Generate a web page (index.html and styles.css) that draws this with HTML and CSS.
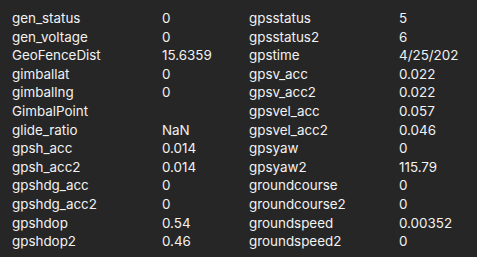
FILE: index.html
```html
<!DOCTYPE html>
<html>
<head>
<meta charset="utf-8">
<link rel="stylesheet" href="styles.css">
</head>
<body>
<div class="grid">
  <div class="row"><span class="n">gen_status</span><span class="v">0</span><span class="n">gpsstatus</span><span class="v">5</span></div>
  <div class="row"><span class="n">gen_voltage</span><span class="v">0</span><span class="n">gpsstatus2</span><span class="v">6</span></div>
  <div class="row"><span class="n">GeoFenceDist</span><span class="v">15.6359</span><span class="n">gpstime</span><span class="v">4/25/202</span></div>
  <div class="row"><span class="n">gimballat</span><span class="v">0</span><span class="n">gpsv_acc</span><span class="v">0.022</span></div>
  <div class="row"><span class="n">gimballng</span><span class="v">0</span><span class="n">gpsv_acc2</span><span class="v">0.022</span></div>
  <div class="row"><span class="n">GimbalPoint</span><span class="v"></span><span class="n">gpsvel_acc</span><span class="v">0.057</span></div>
  <div class="row"><span class="n">glide_ratio</span><span class="v">NaN</span><span class="n">gpsvel_acc2</span><span class="v">0.046</span></div>
  <div class="row"><span class="n">gpsh_acc</span><span class="v">0.014</span><span class="n">gpsyaw</span><span class="v">0</span></div>
  <div class="row"><span class="n">gpsh_acc2</span><span class="v">0.014</span><span class="n">gpsyaw2</span><span class="v">115.79</span></div>
  <div class="row"><span class="n">gpshdg_acc</span><span class="v">0</span><span class="n">groundcourse</span><span class="v">0</span></div>
  <div class="row"><span class="n">gpshdg_acc2</span><span class="v">0</span><span class="n">groundcourse2</span><span class="v">0</span></div>
  <div class="row"><span class="n">gpshdop</span><span class="v">0.54</span><span class="n">groundspeed</span><span class="v">0.00352</span></div>
  <div class="row"><span class="n">gpshdop2</span><span class="v">0.46</span><span class="n">groundspeed2</span><span class="v">0</span></div>
</div>
</body>
</html>
```
FILE: styles.css
```css
html, body {
  margin: 0;
  padding: 0;
  background: #262626;
  width: 477px;
  height: 257px;
  overflow: hidden;
}
.grid {
  padding: 9px 0 0 12px;
  font-family: Inter, "Liberation Sans", sans-serif;
  font-size: 13.4px;
  color: #f2f2f2;
}
.row {
  display: grid;
  grid-template-columns: 150px 87px 150px 1fr;
  height: 18.6px;
  line-height: 18.6px;
  white-space: nowrap;
}
.row span {
  overflow: hidden;
}
```
